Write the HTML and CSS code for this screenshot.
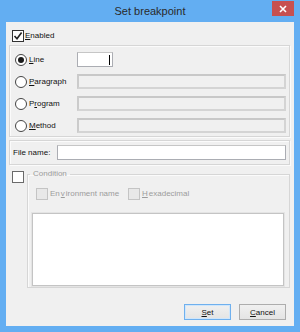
FILE: index.html
```html
<!DOCTYPE html>
<html lang="en">
<head>
<meta charset="UTF-8">
<title>Set breakpoint</title>
<link rel="stylesheet" href="styles.css">
</head>
<body>
<div class="window">
<div class="titlebar">
<span class="title">Set breakpoint</span>
<span class="close"><svg width="8" height="8" viewBox="0 0 8 8"><path d="M1 1L7 7M7 1L1 7" stroke="#fff" stroke-width="1.6"/></svg></span>
</div>
<div class="client">
<div class="enabled-row">
<span class="check"><svg width="10" height="10" viewBox="0 0 10 10"><path d="M1.5 5L4 7.8L8.6 1.6" fill="none" stroke="#222" stroke-width="1.6"/></svg></span>
<span><u>E</u>nabled</span>
</div>
<div class="group locate">
<div class="row">
<span class="radio on"></span><span class="rlabel"><u>L</u>ine</span>
<span class="field white short"><span class="caret"></span></span>
</div>
<div class="row">
<span class="radio"></span><span class="rlabel"><u>P</u>aragraph</span>
<span class="field off"></span>
</div>
<div class="row">
<span class="radio"></span><span class="rlabel">P<u>r</u>ogram</span>
<span class="field off"></span>
</div>
<div class="row">
<span class="radio"></span><span class="rlabel"><u>M</u>ethod</span>
<span class="field off"></span>
</div>
</div>
<div class="group file">
<span class="flabel">File name:</span>
<span class="field white"></span>
</div>
<div class="cond">
<span class="check plain"></span>
<fieldset>
<legend>Condition</legend>
<div class="opts">
<span class="opt env"><span class="check dis"></span>En<u>v</u>ironment name</span>
<span class="opt"><span class="check dis"></span><u>H</u>exadecimal</span>
</div>
<div class="textarea"></div>
</fieldset>
</div>
<div class="buttons">
<button class="default"><u>S</u>et</button>
<button><u>C</u>ancel</button>
</div>
</div>
</div>
</body>
</html>
```

FILE: styles.css
```css
body {
margin: 0;
font-family: "Liberation Sans", Arial, sans-serif;
font-size: 8px;
color: #111;
}
.window {
width: 300px;
height: 332px;
background-color: #63aef2;
display: flex;
flex-direction: column;
}
.titlebar {
position: relative;
height: 22px;
display: flex;
align-items: center;
justify-content: center;
}
.title {
font-size: 11px;
color: #2a2a2a;
margin-top: -1px;
}
.close {
position: absolute;
top: 1px;
right: 6px;
width: 22px;
height: 15px;
background-color: #c75050;
display: flex;
align-items: center;
justify-content: center;
}
.client {
flex: 1;
margin: 0 6px 6px 6px;
background-color: #f0f0f0;
padding: 0 4px 0 3px;
display: flex;
flex-direction: column;
}
.enabled-row {
display: flex;
align-items: center;
gap: 1px;
padding-top: 7px;
padding-left: 3px;
height: 13px;
line-height: 12px;
}
.check {
width: 10px;
height: 10px;
border: 1px solid #333;
background-color: #fff;
display: flex;
align-items: center;
justify-content: center;
flex-shrink: 0;
}
.check.plain {
border-color: #6a6a6a;
margin-top: 2px;
margin-left: 3px;
}
.check.dis {
border-color: #c4c4c4;
background-color: #e8e8e8;
margin-right: 1px;
}
.group {
border: 1px solid #d6d6d6;
box-shadow: inset 1px 1px 0 #fbfbfb, 1px 1px 0 #fbfbfb;
margin-top: 3px;
}
.locate {
padding: 6px 3px 3px 5px;
display: flex;
flex-direction: column;
gap: 7px;
}
.row {
display: flex;
align-items: center;
height: 15px;
}
.radio {
width: 10px;
height: 10px;
border: 1px solid #444;
border-radius: 50%;
background-color: #fff;
margin-right: 2px;
display: flex;
align-items: center;
justify-content: center;
}
.radio.on::after {
content: "";
width: 6px;
height: 6px;
border-radius: 50%;
background-color: #1a1a1a;
}
.rlabel {
width: 48px;
}
.field {
flex: 1;
height: 15px;
box-sizing: border-box;
}
.field.white {
background-color: #fff;
border: 1px solid #abadb3;
border-top-color: #c6c6c6;
}
.field.off {
background-color: #f0f0f0;
border: 2px solid #d4d4d4;
border-top-color: #c8c8c8;
border-left-color: #cbcbcb;
}
.field.short {
flex: none;
width: 36px;
display: flex;
justify-content: flex-end;
align-items: center;
padding-right: 2px;
}
.caret {
width: 1px;
height: 10px;
background-color: #000;
}
.file {
padding: 4px 3px 4px 3px;
display: flex;
align-items: center;
}
.flabel {
width: 44px;
}
.cond {
display: flex;
align-items: flex-start;
margin-top: 4px;
}
fieldset {
flex: 1;
margin: 0 0 0 3px;
padding: 9px 5px 1px 4px;
border: 1px solid #d6d6d6;
box-shadow: inset 1px 1px 0 #fbfbfb;
min-width: 0;
}
legend {
margin-left: -2px;
padding: 0 3px;
line-height: 10px;
color: #9a9a9a;
}
.opts {
display: flex;
align-items: center;
padding-left: 4px;
height: 11px;
color: #9c9c9c;
}
.opt {
display: flex;
align-items: center;
gap: 1px;
}
.opt.env {
width: 92px;
}
.textarea {
margin-top: 14px;
height: 71px;
background-color: #fff;
border: 1px solid #c4c4c4;
box-shadow: 0 0 0 1px #e4e4e4;
}
.buttons {
display: flex;
justify-content: flex-end;
gap: 8px;
margin-top: 16px;
margin-right: 4px;
}
button {
width: 47px;
height: 16px;
padding: 0;
font-family: "Liberation Sans", Arial, sans-serif;
font-size: 8px;
color: #111;
background: linear-gradient(#f0f0f0, #e4e4e4);
border: 1px solid #adadad;
}
button.default {
border-color: #6fb0ee;
box-shadow: inset 0 0 0 1px #cfe6fb;
}
```
